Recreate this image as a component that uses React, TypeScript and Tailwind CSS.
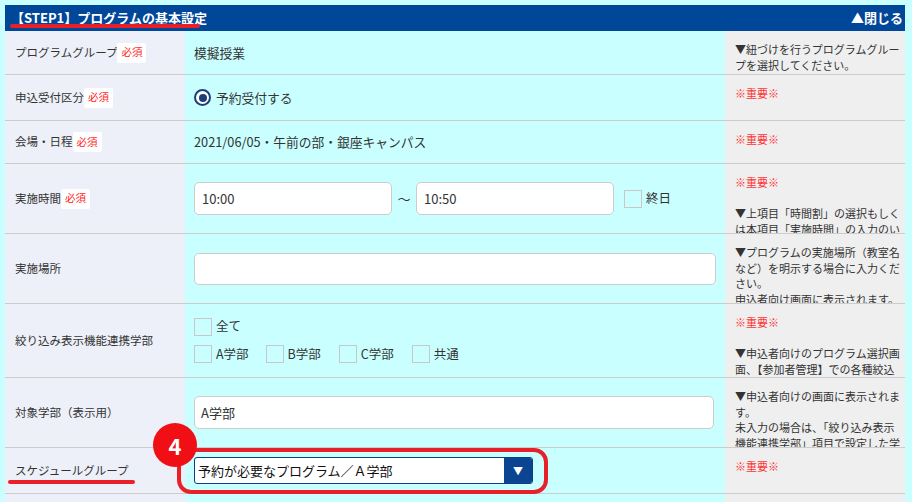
import React from "react";

const FONT = { fontFamily: '"Noto Sans CJK JP", "Noto Sans", sans-serif' };

function Badge() {
  return (
    <span className="inline-flex h-[20px] items-center rounded-[2px] bg-white px-[4px] text-[10.5px] leading-none text-[#ff1f1f]">
      必須
    </span>
  );
}

function Check({ label, className = "" }: { label: string; className?: string }) {
  return (
    <span className={"flex items-center " + className}>
      <span className="h-[18px] w-[18px] border border-[#c8c8c8]" />
      <span className="ml-[4px] text-[12.5px] text-[#333]">{label}</span>
    </span>
  );
}

function Row({
  h,
  label,
  badge,
  mid,
  right,
}: {
  h: string;
  label: React.ReactNode;
  badge?: boolean;
  mid?: React.ReactNode;
  right?: React.ReactNode;
}) {
  return (
    <div className={"grid grid-cols-[180px_540px_180px] border-b border-[#cccccc] " + h}>
      <div className="flex items-center bg-[#edf0f8] pl-[10px] text-[11.5px] text-[#333]">
        <span>{label}</span>
        {badge && <Badge />}
      </div>
      <div className="flex items-center bg-[#c9ffff] px-[9px] text-[12.75px] text-[#333]">{mid}</div>
      <div className="overflow-hidden bg-[#efefef] pl-[10px] pr-[4px] pt-[11px] text-[11px] leading-[15.5px] text-[#333]">
        {right}
      </div>
    </div>
  );
}

const Imp = () => <div className="text-[#ff3333]">※重要※</div>;

export default function App() {
  return (
    <div style={FONT} className="relative h-[502px] w-[912px] overflow-hidden bg-[#c9ffff] pl-[5px] pt-[5px]">
      <div className="w-[900px]">
        {/* header */}
        <div className="flex h-[26px] items-center justify-between bg-[#00479a] pl-[6px] pr-[2px] text-[13px] font-bold text-white">
          <span>【STEP1】プログラムの基本設定</span>
          <span>▲閉じる</span>
        </div>

        <Row
          h="h-[44px]"
          label="プログラムグループ"
          badge
          mid={<span>模擬授業</span>}
          right={<div>▼紐づけを行うプログラムグループを選択してください。</div>}
        />
        <Row
          h="h-[46px]"
          label="申込受付区分"
          badge
          mid={
            <span className="flex items-center">
              <span className="flex h-[17px] w-[17px] items-center justify-center rounded-full border-[2px] border-[#1d3f78] bg-white">
                <span className="h-[8px] w-[8px] rounded-full bg-[#1d3f78]" />
              </span>
              <span className="ml-[5px]">予約受付する</span>
            </span>
          }
          right={<Imp />}
        />
        <Row
          h="h-[43px]"
          label="会場・日程"
          badge
          mid={<span>2021/06/05・午前の部・銀座キャンパス</span>}
          right={<Imp />}
        />
        <Row
          h="h-[70px]"
          label="実施時間"
          badge
          mid={
            <div className="flex items-center">
              <div className="flex h-[33px] w-[198px] items-center rounded-[5px] border border-[#cccccc] bg-white px-[7px] text-[13px]">
                10:00
              </div>
              <span className="w-[24px] text-center text-[13px]">～</span>
              <div className="flex h-[33px] w-[198px] items-center rounded-[5px] border border-[#cccccc] bg-white px-[7px] text-[13px]">
                10:50
              </div>
              <Check label="終日" className="ml-[10px]" />
            </div>
          }
          right={
            <>
              <Imp />
              <div>&nbsp;</div>
              <div>
                ▼上項目「時間割」の選択もしく
                <br />
                は本項目「実施時間」の入力のいずれかが必須です。
              </div>
            </>
          }
        />
        <Row
          h="h-[70px]"
          label="実施場所"
          mid={<div className="h-[32px] w-[522px] rounded-[5px] border border-[#cccccc] bg-white" />}
          right={
            <>
              <div>▼プログラムの実施場所（教室名など）を明示する場合に入力ください。</div>
              <div>申込者向け画面に表示されます。</div>
            </>
          }
        />
        <Row
          h="h-[74px]"
          label="絞り込み表示機能連携学部"
          mid={
            <div className="flex flex-col gap-[9px]">
              <Check label="全て" />
              <div className="flex items-center">
                <Check label="A学部" className="mr-[17px]" />
                <Check label="B学部" className="mr-[18px]" />
                <Check label="C学部" className="mr-[18px]" />
                <Check label="共通" />
              </div>
            </div>
          }
          right={
            <>
              <Imp />
              <div>&nbsp;</div>
              <div>▼申込者向けのプログラム選択画面、【参加者管理】での各種絞込みに使用されます。</div>
            </>
          }
        />
        <Row
          h="h-[70px]"
          label="対象学部（表示用）"
          mid={
            <div className="flex h-[33px] w-[520px] items-center rounded-[5px] border border-[#cccccc] bg-white px-[6px] text-[13px]">
              A学部
            </div>
          }
          right={
            <>
              <div>▼申込者向けの画面に表示されます。</div>
              <div>未入力の場合は、「絞り込み表示機能連携学部」項目で設定した学部が表示されます。</div>
            </>
          }
        />
        <Row
          h="h-[46px]"
          label="スケジュールグループ"
          mid={
            <div className="flex h-[27px] w-[339px] items-stretch overflow-hidden rounded-[3px] border border-[#0b3f86] bg-white">
              <span className="flex flex-1 items-center pl-[3px] text-[13px] text-[#111]">予約が必要なプログラム／Ａ学部</span>
              <span className="flex w-[28px] items-center justify-center bg-[#0b4592] text-[10px] text-white">▼</span>
            </div>
          }
          right={<Imp />}
        />
        <Row h="h-[40px]" label="" />
      </div>

      {/* annotations */}
      <div className="absolute left-[10px] top-[24px] h-[4px] w-[190px] rounded-full bg-[#e8202a]" />
      <div className="absolute left-[8px] top-[480px] h-[4px] w-[127px] rounded-full bg-[#e8202a]" />
      <div className="absolute left-[177px] top-[448px] h-[46px] w-[371px] rounded-[14px] border-[4px] border-[#e8202a]" />
      <div className="absolute left-[153px] top-[423px] flex h-[44px] w-[44px] items-center justify-center rounded-full bg-[#f00f14] text-[22px] font-bold text-white">
        4
      </div>
    </div>
  );
}
